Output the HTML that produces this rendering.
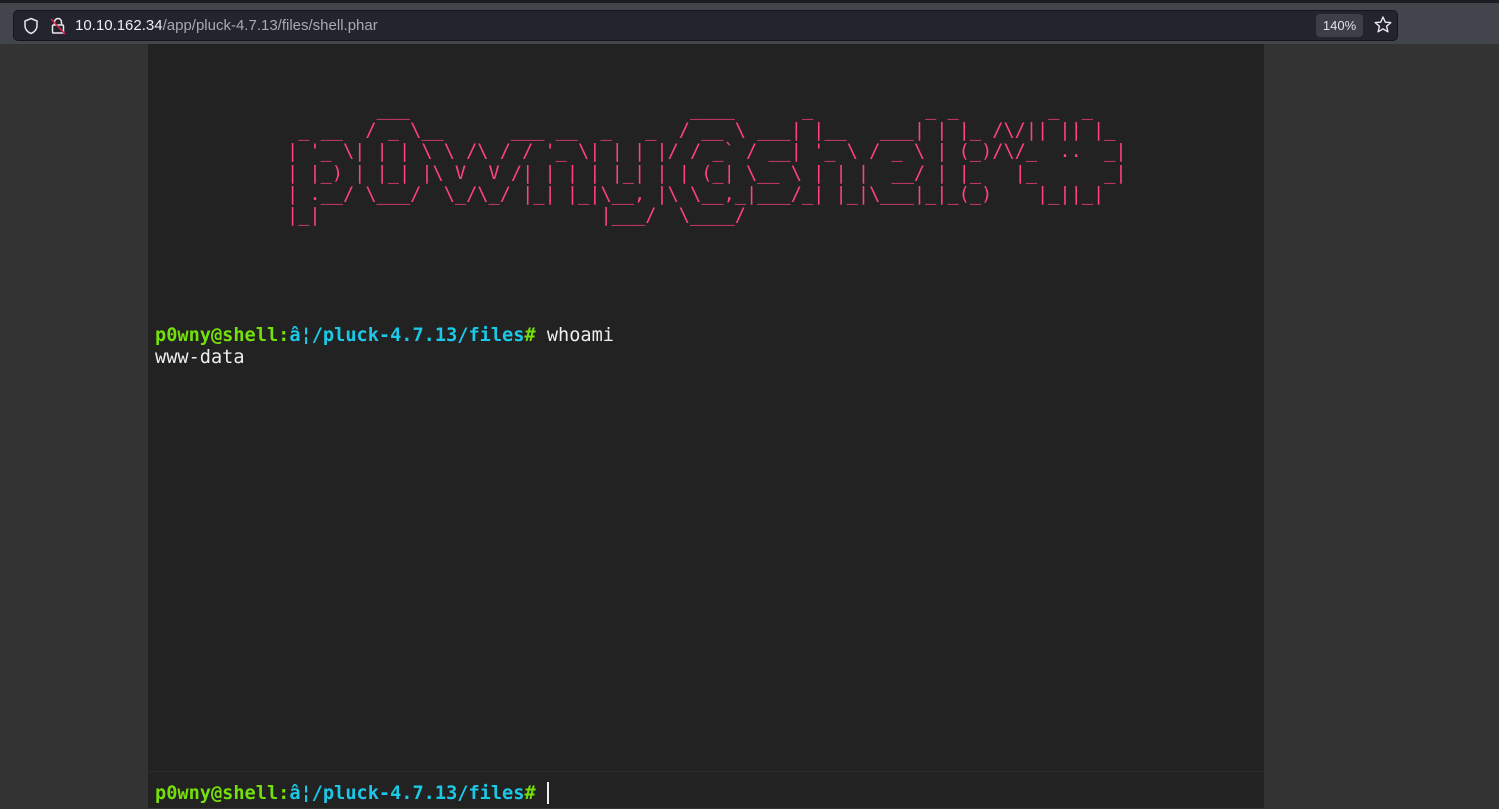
<!DOCTYPE html>
<html><head><meta charset="utf-8"><style>
html,body{margin:0;padding:0;width:1499px;height:808px;overflow:hidden;background:#333;}
.top{position:absolute;left:0;top:0;width:1499px;height:44px;background:#43454d;border-top:3px solid #1c1d22;box-sizing:border-box;}
.url{position:absolute;left:13px;top:7px;width:1385px;height:31px;box-sizing:border-box;background:#23242d;border:1px solid #15161a;border-radius:5px;}
.urltext{position:absolute;left:61px;top:6px;font:15px "Liberation Sans",sans-serif;color:#a8a9b0;}
.urltext b{font-weight:normal;color:#eceef2;}
.zoom{position:absolute;left:1316px;top:11px;width:47px;height:23px;background:#3d3f48;border-radius:4px;color:#e0e0e5;font:13px "Liberation Sans",sans-serif;text-align:center;line-height:23px;}
.main{position:absolute;left:148px;top:44px;width:1116px;height:764px;background:#222;}
pre{margin:0;font-family:"DejaVu Sans Mono","Liberation Mono",monospace;font-size:18.6px;}
.banner{position:absolute;left:139px;top:55px;color:#ff4180;line-height:21.2px;}
.out{position:absolute;left:7px;top:281px;line-height:22px;color:#eee;}
.g{color:#75df0b;font-weight:bold}.c{color:#1bc9e7;font-weight:bold}
.bot{position:absolute;left:0;top:727px;width:1116px;height:37px;border-top:1px solid #2c2c2c;}
.bot pre{position:absolute;left:7px;top:10px;line-height:22px;color:#eee;}
.cur{display:inline-block;width:2px;height:22px;background:#eee;vertical-align:-5px;margin-left:0px;}
</style></head><body>
<div class="top">
 <div class="url">
  <svg style="position:absolute;left:9px;top:6px" width="16" height="18" viewBox="0 0 16 18"><path d="M8 1.5 L14 4 V8.5 C14 12.5 11 15.5 8 16.5 C5 15.5 2 12.5 2 8.5 V4 Z" fill="none" stroke="#e8e8ec" stroke-width="1.5"/></svg>
  <svg style="position:absolute;left:36px;top:5px" width="16" height="20" viewBox="0 0 16 20"><path d="M4.5 9 V6 A3.5 3.5 0 0 1 11.5 6 V9" fill="none" stroke="#e8e8ec" stroke-width="1.5"/><rect x="2.5" y="9" width="11" height="8" rx="1" fill="none" stroke="#e8e8ec" stroke-width="1.5"/><path d="M1 3 L15 18" stroke="#e0204a" stroke-width="1.5"/></svg>
  <div class="urltext"><b>10.10.162.34</b>/app/pluck-4.7.13/files/shell.phar</div>
 </div>
 <div class="zoom">140%</div>
 <svg style="position:absolute;left:1373px;top:12px" width="20" height="20" viewBox="0 0 20 20"><path d="M10 2 L12.3 7.2 L17.8 7.6 L13.6 11.2 L14.9 16.8 L10 13.9 L5.1 16.8 L6.4 11.2 L2.2 7.6 L7.7 7.2 Z" fill="none" stroke="#e8e8ec" stroke-width="1.4" stroke-linejoin="round"/></svg>
</div>
<div class="main">
<pre class="banner">        ___                         ____      _          _ _        _  _   
 _ __  / _ \__      ___ __  _   _  / __ \ ___| |__   ___| | |_ /\/|| || |_ 
| '_ \| | | \ \ /\ / / '_ \| | | |/ / _` / __| '_ \ / _ \ | (_)/\/_  ..  _|
| |_) | |_| |\ V  V /| | | | |_| | | (_| \__ \ | | |  __/ | |_   |_      _|
| .__/ \___/  \_/\_/ |_| |_|\__, |\ \__,_|___/_| |_|\___|_|_(_)    |_||_|  
|_|                         |___/  \____/                                  </pre>
<pre class="out"><span class="g">p0wny@shell</span><span class="g">:</span><span class="c">â¦/pluck-4.7.13/files</span><span class="g">#</span> whoami
www-data</pre>
<div class="bot"><pre><span class="g">p0wny@shell</span><span class="g">:</span><span class="c">â¦/pluck-4.7.13/files</span><span class="g">#</span> <span class="cur"></span></pre></div>
</div>
</body></html>
